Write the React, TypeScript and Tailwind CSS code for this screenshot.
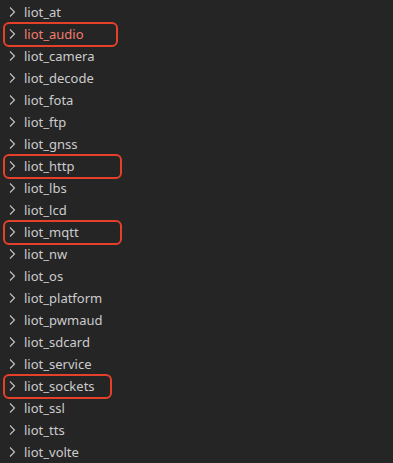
const items = [
  "liot_at",
  "liot_audio",
  "liot_camera",
  "liot_decode",
  "liot_fota",
  "liot_ftp",
  "liot_gnss",
  "liot_http",
  "liot_lbs",
  "liot_lcd",
  "liot_mqtt",
  "liot_nw",
  "liot_os",
  "liot_platform",
  "liot_pwmaud",
  "liot_sdcard",
  "liot_service",
  "liot_sockets",
  "liot_ssl",
  "liot_tts",
  "liot_volte",
];

// highlighted folders: box width in px
const marked: Record<string, string> = {
  liot_audio: "w-[115px]",
  liot_http: "w-[119px]",
  liot_mqtt: "w-[119px]",
  liot_sockets: "w-[109px]",
};

function Chevron() {
  return (
    <svg width="16" height="16" viewBox="0 0 16 16" className="shrink-0">
      <path d="M6 3.5 L10.5 8 L6 12.5" fill="none" stroke="#c5c5c5" strokeWidth="1.1" />
    </svg>
  );
}

export default function App() {
  return (
    <div
      className="w-[393px] h-[463px] bg-[#252526] pt-px overflow-hidden"
      style={{ fontFamily: '"Noto Sans", "Open Sans", sans-serif' }}
    >
      {items.map((name) => {
        const box = marked[name];
        return (
          <div key={name} className="relative flex items-center h-[22px] pl-[4px]">
            <Chevron />
            <span
              className={`ml-[4px] text-[13px] leading-[22px] ${
                name === "liot_audio" ? "text-[#f27c6b]" : "text-[#cccccc]"
              }`}
            >
              {name}
            </span>
            {box && (
              <div
                className={`absolute left-[3px] -top-px -bottom-[2px] ${box} border-2 border-[#e5402a] rounded-[6px]`}
              />
            )}
          </div>
        );
      })}
    </div>
  );
}
